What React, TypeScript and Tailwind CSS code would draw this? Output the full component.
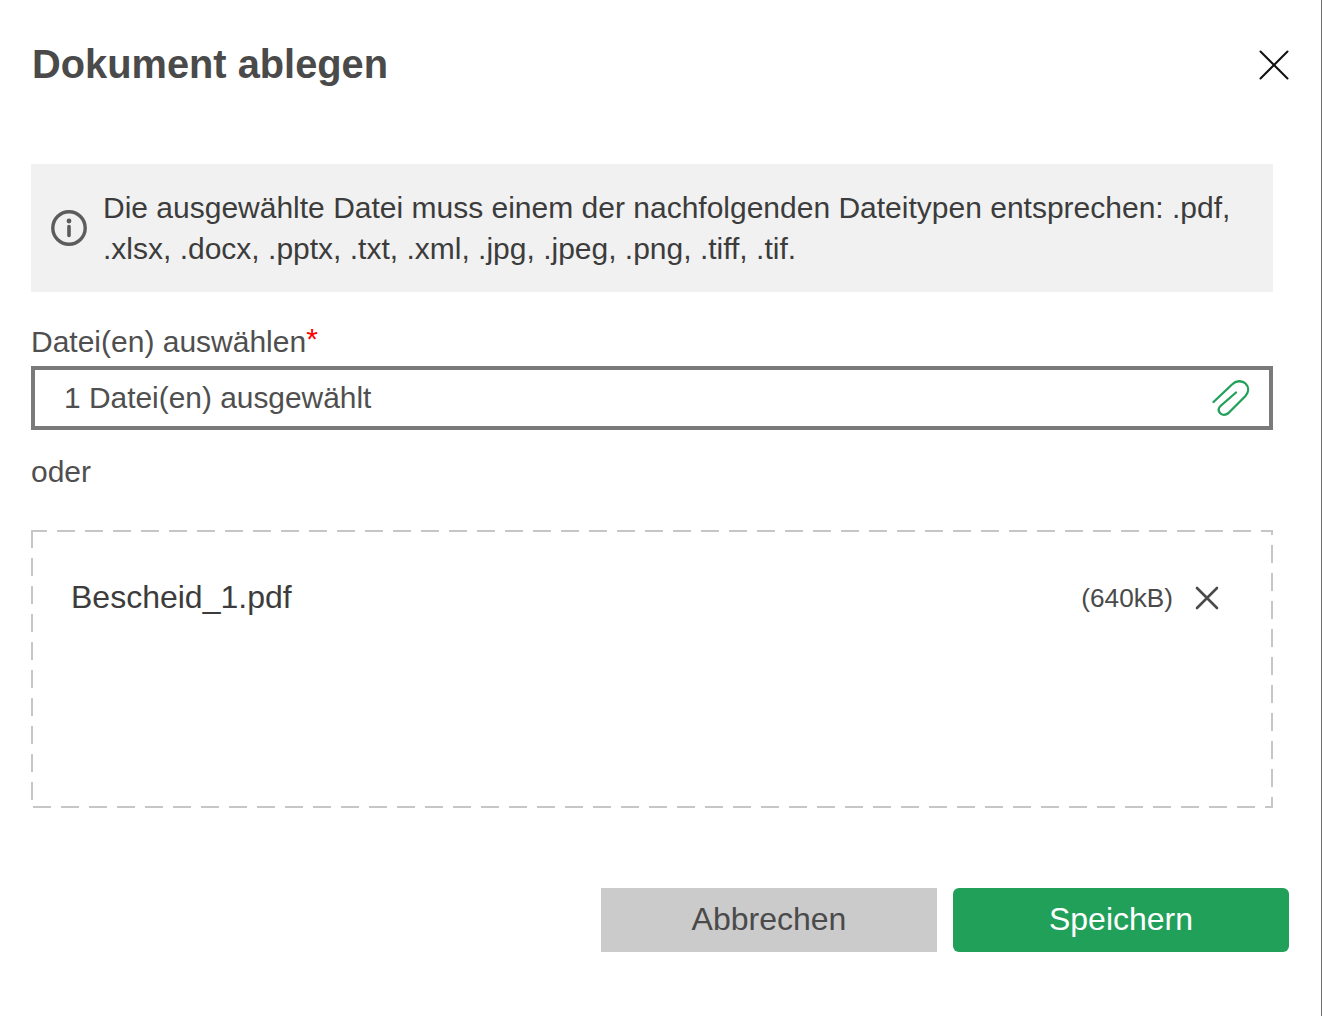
import React from "react";

const Paperclip = () => (
  <svg width="38" height="38" viewBox="0 0 38 38" fill="none" stroke="#21a05a" strokeWidth="2.3" strokeLinecap="round" strokeLinejoin="round">
    <path d="M1.5 23 L20 5.5 C24 1.5 30 1.2 33.5 4.5 C37 8 37 13 33.5 17 L16.5 34 C13.5 36.5 10 36.3 8 34 C6 31.5 6.3 29 8.5 27 L24 13.5" />
  </svg>
);

export default function App() {
  return (
    <div className="w-[1322px] h-[1016px] bg-white border-r border-[#6f6f6f] font-['Liberation_Sans',Arial,sans-serif] text-[#4a4a4a] overflow-hidden box-border">
      <div className="flex justify-between pl-[32px] pr-[32px] pt-[39px] h-[124px] items-start">
        <h1 className="text-[39.8px] leading-[50px] font-bold text-[#4a4a4a]">Dokument ablegen</h1>
        <button className="w-[30px] h-[30px] mt-[11px]" aria-label="Schließen">
          <svg width="30" height="30" viewBox="0 0 30 30" stroke="#111" strokeWidth="2" strokeLinecap="round">
            <path d="M1.5 1.5 L28.5 28.5 M28.5 1.5 L1.5 28.5" />
          </svg>
        </button>
      </div>
      <div className="ml-[31px] w-[1242px]">
        <div className="mt-[40px] h-[128px] bg-[#f1f1f1] flex items-center pl-[20px] pr-[24px] gap-[16px] text-[#3c3c3c]">
          <svg className="shrink-0" width="36" height="36" viewBox="0 0 36 36" fill="none">
            <circle cx="18" cy="18" r="16.2" stroke="#5c5c5c" strokeWidth="3.4" />
            <circle cx="18" cy="11" r="2.4" fill="#5c5c5c" />
            <path d="M18 16.5 V25.5" stroke="#5c5c5c" strokeWidth="3.6" strokeLinecap="round" />
          </svg>
          <p className="text-[30px] leading-[41px]">
            Die ausgewählte Datei muss einem der nachfolgenden Dateitypen entsprechen: .pdf, .xlsx, .docx, .pptx, .txt, .xml, .jpg, .jpeg, .png, .tiff, .tif.
          </p>
        </div>
        <label className="block mt-[30px] text-[30px] leading-[40px] text-[#4f4f4f]">
          Datei(en) auswählen<span className="text-[#ff0000] relative -top-[3px]">*</span>
        </label>
        <div className="mt-[4px] h-[64px] border-4 border-[#7a7a7a] flex items-center justify-between pl-[29px] pr-[19px] text-[30px] text-[#4f4f4f]">
          <span className="leading-[40px] text-[29.9px]">1 Datei(en) ausgewählt</span>
          <Paperclip />
        </div>
        <div className="mt-[22px] text-[30px] leading-[40px] text-[#4f4f4f]">oder</div>
        <div className="mt-[38px] h-[278px] pl-[40px] pr-[54px] pt-[47px] flex items-start justify-between bg-[linear-gradient(to_right,#c6c6c6_18px,transparent_18px),linear-gradient(to_right,#c6c6c6_18px,transparent_18px),linear-gradient(to_bottom,#c6c6c6_18px,transparent_18px),linear-gradient(to_bottom,#c6c6c6_18px,transparent_18px)] [background-repeat:repeat-x,repeat-x,repeat-y,repeat-y] [background-size:28px_2px,28px_2px,2px_28px,2px_28px] [background-position:-2px_0,2px_100%,0_0,100%_15px]">
          <span className="text-[32px] leading-[40px] text-[#3c3c3c]">Bescheid_1.pdf</span>
          <div className="flex items-center gap-[22px] h-[40px]">
            <span className="mt-[4px] text-[26.2px] text-[#4a4a4a]">(640kB)</span>
            <svg className="mt-[2px]" width="24" height="24" viewBox="0 0 24 24" stroke="#4a4a4a" strokeWidth="2.6" strokeLinecap="round">
              <path d="M2 2 L22 22 M22 2 L2 22" />
            </svg>
          </div>
        </div>
      </div>
      <div className="mt-[80px] pr-[32px] flex justify-end gap-[16px]">
        <button className="w-[336px] h-[64px] pb-[2px] bg-[#cbcbcb] text-[#4a4a4a] text-[32px]">Abbrechen</button>
        <button className="w-[336px] h-[64px] pb-[2px] bg-[#21a05a] text-white text-[32px] rounded-[6px]">Speichern</button>
      </div>
    </div>
  );
}
